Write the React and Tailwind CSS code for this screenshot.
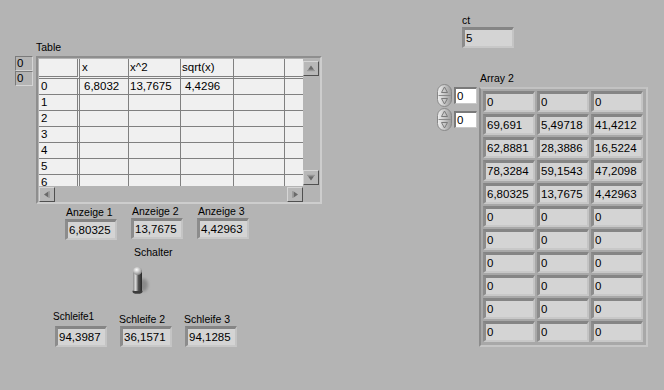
import React from "react";

const tableHead = ["", "x", "x^2", "sqrt(x)", "", ""];
const tableRows = [
  ["0", "6,8032", "13,7675", "4,4296", "", ""],
  ["1", "", "", "", "", ""],
  ["2", "", "", "", "", ""],
  ["3", "", "", "", "", ""],
  ["4", "", "", "", "", ""],
  ["5", "", "", "", "", ""],
  ["6", "", "", "", "", ""],
];
const cellPad = ["pl-[2px]", "pl-[4px]", "pl-px", "pl-[4px]", "pl-px", "pl-px"];
const headPad = ["pl-[2px]", "pl-[2px]", "pl-px", "pl-px", "pl-px", "pl-px"];

const arrayData = [
  ["0", "0", "0"],
  ["69,691", "5,49718", "41,4212"],
  ["62,8881", "28,3886", "16,5224"],
  ["78,3284", "59,1543", "47,2098"],
  ["6,80325", "13,7675", "4,42963"],
  ["0", "0", "0"],
  ["0", "0", "0"],
  ["0", "0", "0"],
  ["0", "0", "0"],
  ["0", "0", "0"],
  ["0", "0", "0"],
];

// numeric indicator box (LabVIEW style sunken frame)
function Indicator({ value }) {
  return (
    <div className="w-[52px] h-[21px] border-t-[3px] border-l-[3px] border-r-2 border-b-2 border-t-[#858585] border-l-[#8c8c8c] border-r-[#c4c4c4] border-b-[#c8c8c8] bg-[#a6a6a6]">
      <div className="h-full bg-[#d4d4d4] pl-px text-[11.5px] leading-[16px]">{value}</div>
    </div>
  );
}

function ScrollArrow({ dir }) {
  const paths = {
    up: { tri: "M7.5 4 L11 9 L4 9 Z", bar: "M3 10 H12" },
    down: { tri: "M7.5 11 L11 6 L4 6 Z", bar: "M3 5 H12" },
    left: { tri: "M4 7.5 L9 4 L9 11 Z", bar: "M10 3.5 V11.5" },
    right: { tri: "M11 7.5 L6 4 L6 11 Z", bar: "M5 3.5 V11.5" },
  }[dir];
  return (
    <div className="w-[16px] h-[15px] border-r border-b border-r-[#505050] border-b-[#505050] border-t border-l border-t-[#d6d6d6] border-l-[#d6d6d6] bg-[#b8b8b8] flex items-center justify-center">
      <svg width="14" height="13" viewBox="0 0 15 15">
        <path d={paths.bar} stroke="#8a8a8a" strokeWidth="1" fill="none" />
        <path d={paths.tri} fill="#6a6a6a" />
      </svg>
    </div>
  );
}

function Spinner() {
  return (
    <svg width="15" height="23" viewBox="0 0 15 23">
      <defs>
        <linearGradient id="spin" x1="0" x2="1">
          <stop offset="0" stopColor="#f2f2f2" />
          <stop offset="1" stopColor="#9a9a9a" />
        </linearGradient>
      </defs>
      <rect x="0.5" y="0.5" width="14" height="22" rx="7" fill="url(#spin)" stroke="#888" />
      <line x1="1.5" y1="11.5" x2="13.5" y2="11.5" stroke="#8a8a8a" />
      <path d="M7.5 3 L10.5 8.5 H4.5 Z" fill="none" stroke="#7a7a7a" />
      <path d="M7.5 20 L10.5 14.5 H4.5 Z" fill="none" stroke="#7a7a7a" />
    </svg>
  );
}

function Toggle() {
  return (
    <svg width="22" height="32" viewBox="0 0 22 32">
      <defs>
        <linearGradient id="lever" x1="0" x2="1">
          <stop offset="0" stopColor="#8a8a8a" />
          <stop offset="0.3" stopColor="#dcdcdc" />
          <stop offset="0.6" stopColor="#555" />
          <stop offset="1" stopColor="#262626" />
        </linearGradient>
        <radialGradient id="knob" cx="0.4" cy="0.35" r="0.65">
          <stop offset="0" stopColor="#ffffff" />
          <stop offset="1" stopColor="#8c8c8c" />
        </radialGradient>
        <filter id="soft" x="-50%" y="-50%" width="200%" height="200%">
          <feGaussianBlur stdDeviation="1.6" />
        </filter>
      </defs>
      <ellipse cx="13.5" cy="21" rx="4.5" ry="6.5" fill="#8a8a8a" filter="url(#soft)" />
      <ellipse cx="7.5" cy="27.5" rx="5" ry="2.3" fill="#3c3c3c" />
      <rect x="3" y="6" width="9" height="21" rx="1" fill="url(#lever)" />
      <ellipse cx="7.5" cy="7" rx="4.5" ry="4" fill="url(#knob)" />
    </svg>
  );
}

export default function App() {
  return (
    <div className="relative w-[664px] h-[390px] overflow-hidden bg-[#b4b4b4] text-black font-['Liberation_Sans',Arial,sans-serif]">
      {/* Table label */}
      <div className="absolute left-[36px] top-[41px] text-[10.5px] leading-[12px]">Table</div>

      {/* Table index displays */}
      <div className="absolute left-[15px] top-[56px] flex flex-col">
        {["0", "0"].map((v, i) => (
          <div
            key={i}
            className="w-[18px] h-[15px] border border-t-[#7a7a7a] border-l-[#7a7a7a] border-r-[#d4d4d4] border-b-[#d4d4d4] pl-px text-[11.5px] leading-[12px]"
          >
            {v}
          </div>
        ))}
      </div>

      {/* Table */}
      <div className="absolute left-[36px] top-[56px] w-[286px] h-[148px] border-2 border-t-[#8e8e8e] border-l-[#8e8e8e] border-r-[#cdcdcd] border-b-[#cdcdcd] p-px">
        <div className="grid grid-cols-[264px_16px] grid-rows-[127px_15px]">
          <div className="overflow-hidden">
            <div className="grid grid-cols-[40px_48px_51px_52px_50px_18px] grid-rows-[19px] auto-rows-[15px] gap-px bg-[#808080] text-[11.5px]">
              {tableHead.map((h, i) => (
                <div key={"h" + i} className={"bg-[#f0f0f0] pb-px " + (i === 0 ? "pr-px" : "")}>
                  <div
                    className={
                      "h-full border-b border-[#808080] leading-[17px] " +
                      headPad[i] +
                      (i === 0 ? " border-r" : "")
                    }
                  >
                    {h}
                  </div>
                </div>
              ))}
              {tableRows.map((row, r) =>
                row.map((c, i) => (
                  <div key={r + "-" + i} className={"bg-[#f0f0f0] " + (i === 0 ? "pr-px" : "")}>
                    <div
                      className={
                        "h-full leading-[15px] " + cellPad[i] + (i === 0 ? " border-r border-[#808080]" : "")
                      }
                    >
                      {c}
                    </div>
                  </div>
                ))
              )}
            </div>
          </div>
          <div className="flex flex-col justify-between pt-[2px] pb-px">
            <ScrollArrow dir="up" />
            <ScrollArrow dir="down" />
          </div>
          <div className="flex justify-between pt-px">
            <ScrollArrow dir="left" />
            <ScrollArrow dir="right" />
          </div>
          <div />
        </div>
      </div>

      {/* Anzeige indicators */}
      <div className="absolute left-[65px] top-[206px] flex flex-col items-start">
        <div className="ml-px text-[10.5px] leading-[12px] mb-px">Anzeige 1</div>
        <Indicator value="6,80325" />
      </div>
      <div className="absolute left-[131px] top-[205px] flex flex-col items-start">
        <div className="ml-px text-[10.5px] leading-[12px] mb-px">Anzeige 2</div>
        <Indicator value="13,7675" />
      </div>
      <div className="absolute left-[197px] top-[205px] flex flex-col items-start">
        <div className="ml-px text-[10.5px] leading-[12px] mb-px">Anzeige 3</div>
        <Indicator value="4,42963" />
      </div>

      {/* Schalter */}
      <div className="absolute left-[130px] top-[246px] flex flex-col items-start">
        <div className="ml-[4px] text-[10.5px] leading-[12px] mb-[6px]">Schalter</div>
        <Toggle />
      </div>

      {/* Schleifen */}
      <div className="absolute left-[53px] top-[311px] flex flex-col items-start">
        <div className="text-[10px] leading-[12px] mb-[3px]">Schleife1</div>
        <div className="ml-[2px]">
          <Indicator value="94,3987" />
        </div>
      </div>
      <div className="absolute left-[119px] top-[313px] flex flex-col items-start">
        <div className="text-[10.5px] leading-[12px] mb-px">Schleife 2</div>
        <div className="ml-px">
          <Indicator value="36,1571" />
        </div>
      </div>
      <div className="absolute left-[184px] top-[313px] flex flex-col items-start">
        <div className="text-[10.5px] leading-[12px] mb-px">Schleife 3</div>
        <div className="ml-px">
          <Indicator value="94,1285" />
        </div>
      </div>

      {/* ct */}
      <div className="absolute left-[462px] top-[14px] flex flex-col items-start">
        <div className="text-[10.5px] leading-[12px] mb-px">ct</div>
        <div className="w-[53px]">
          <Indicator value="5" />
        </div>
      </div>

      {/* Array 2 */}
      <div className="absolute left-[480px] top-[72px] text-[10.5px] leading-[12px]">Array 2</div>
      <div className="absolute left-[437px] top-[84px] flex flex-col gap-px">
        {["0", "0"].map((v, i) => (
          <div key={i} className="flex items-center gap-[2px]">
            <Spinner />
            <div className="w-[23px] h-[17px] border-t-2 border-l-2 border-r border-b border-t-[#7a7a7a] border-l-[#7a7a7a] border-r-[#c8c8c8] border-b-[#c8c8c8] bg-white pl-px text-[11.5px] leading-[14px]">
              {v}
            </div>
          </div>
        ))}
      </div>
      <div className="absolute left-[479px] top-[87px] w-[169px] h-[260px] border-2 border-t-[#c2c2c2] border-l-[#8c8c8c] border-r-[#c6c6c6] border-b-[#c6c6c6] bg-[#a8a8a8] pt-[2px] pl-[2px]">
        <div className="grid grid-cols-[52px_52px_52px] auto-rows-[21px] gap-[2px]">
          {arrayData.map((row, r) =>
            row.map((v, c) => <Indicator key={r + "-" + c} value={v} />)
          )}
        </div>
      </div>
    </div>
  );
}
